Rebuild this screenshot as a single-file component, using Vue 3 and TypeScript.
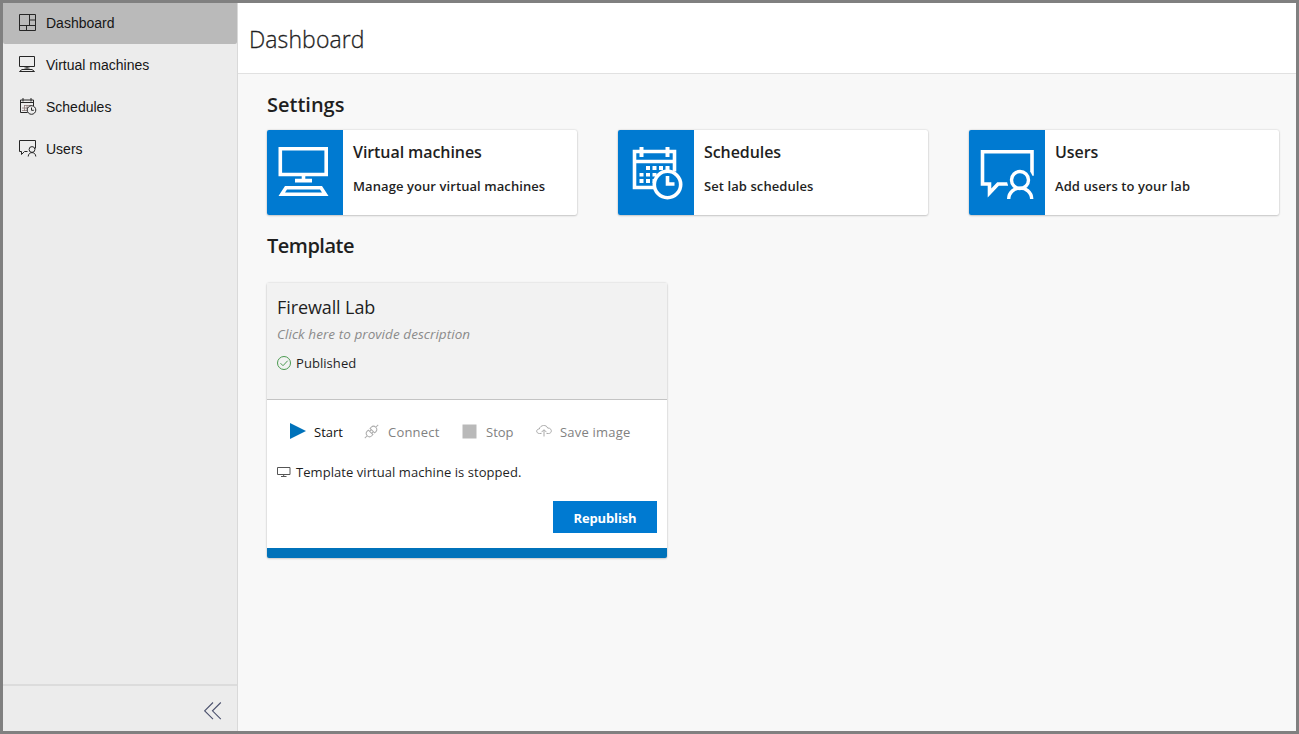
<script setup lang="ts">
import { ref } from 'vue'

interface NavItem { id: string; label: string }
interface Tile { id: string; title: string; text: string }

const nav: NavItem[] = [
  { id: 'dashboard', label: 'Dashboard' },
  { id: 'machines', label: 'Virtual machines' },
  { id: 'schedules', label: 'Schedules' },
  { id: 'users', label: 'Users' },
]
const tiles: Tile[] = [
  { id: 'machines', title: 'Virtual machines', text: 'Manage your virtual machines' },
  { id: 'schedules', title: 'Schedules', text: 'Set lab schedules' },
  { id: 'users', title: 'Users', text: 'Add users to your lab' },
]
const active = ref('dashboard')
</script>

<template>
  <div class="frame">
    <aside class="sidebar">
      <nav class="nav">
        <a v-for="item in nav" :key="item.id" class="nav-item" :class="{ active: item.id === active }" @click="active = item.id">
          <svg v-if="item.id === 'dashboard'" class="nav-icon" viewBox="0 0 18 18">
            <path d="M.5 .5h16v16h-16zM10.500 .5v10.500M.5 11.500h16M10.500 6h6M7.500 11.500v5" />
          </svg>
          <svg v-else-if="item.id === 'machines'" class="nav-icon" viewBox="0 0 18 18">
            <path d="M.5 .5h15v10h-15zM8 10.500v2M5.500 12h5M3 13.500h10l2.500 2h-15z" />
          </svg>
          <svg v-else-if="item.id === 'schedules'" class="nav-icon" viewBox="0 0 18 18">
            <path d="M8.500 14.500h-7v-12.500h13v6M1.500 4.500h13M4 0v3.500M12 0v3.500" />
            <path class="fine" d="M5 7.500h8M3 10h6M3 12.500h5M5.500 7v6M8 7v4" />
            <circle cx="12.500" cy="12" r="4.300" /><path d="M12.500 9.500v2.800h2.300" />
          </svg>
          <svg v-else class="nav-icon" viewBox="0 0 18 18">
            <path d="M8.500 11.500h-3l-3 3v-3h-2v-11h16v8" />
            <circle cx="13" cy="9.500" r="2.900" /><path d="M9.200 16.500c.2-5.200 7.400-5.200 7.600 0" />
          </svg>
          <span>{{ item.label }}</span>
        </a>
      </nav>
      <div class="collapse">
        <svg width="18" height="18" viewBox="0 0 18 18"><path d="M9 .5l-8.300 8.300 8.300 8.300M16.800 .5l-8.300 8.300 8.300 8.300" /></svg>
      </div>
    </aside>

    <main class="main">
      <header class="header"><h1>Dashboard</h1></header>
      <section class="content">
        <h2>Settings</h2>
        <div class="tiles">
          <article v-for="tile in tiles" :key="tile.id" class="tile">
            <div class="tile-icon">
              <svg v-if="tile.id === 'machines'" viewBox="0 0 76 85">
                <path d="M13.300 18.800h45.900v25.700h-45.900zM36.500 45v6" stroke-width="3.600" />
                <path d="M28 52.500h17v-3.700h-17z" class="solid" />
                <path fill-rule="evenodd" class="solid" d="M18 56h37l6.500 10h-50zM20 59.400l-2 3h37l-2-3z" />
              </svg>
              <svg v-else-if="tile.id === 'schedules'" viewBox="0 0 76 85">
                <path d="M39 57.500h-22.500v-36h40v20M16.500 31.500h40" stroke-width="3.600" />
                <path d="M23.500 17v10M49.500 17v10" stroke-width="4" />
                <path class="solid" d="M28 36h4v4h-4zM34.500 36h4v4h-4zM41 36h4v4h-4zM47.500 36h4v4h-4zM21.500 43h4v3.500h-4zM28 43h4v3.500h-4zM34.500 43h4v3.500h-4zM21.500 49h4v4h-4zM28 49h4v4h-4zM34.500 49h3v4h-3z" />
                <circle class="backed" cx="49.500" cy="54.500" r="13.200" stroke-width="3.600" />
                <path d="M49.500 46v8h7" stroke-width="3.600" />
              </svg>
              <svg v-else viewBox="0 0 76 85">
                <path d="M39 54h-10l-8.500 9v-9h-7v-32.200h49.500v24" stroke-width="3.600" />
                <circle class="backed gap" cx="51" cy="50" r="11" />
                <circle class="backed" cx="51" cy="50" r="8.500" stroke-width="3.400" />
                <path d="M39.700 69c.4-14.500 22.500-14.500 23 0" stroke-width="3.400" />
              </svg>
            </div>
            <div class="tile-body">
              <h3>{{ tile.title }}</h3>
              <p>{{ tile.text }}</p>
            </div>
          </article>
        </div>

        <h2 class="template-title">Template</h2>
        <article class="lab">
          <div class="lab-head">
            <h3>Firewall Lab</h3>
            <p class="desc">Click here to provide description</p>
            <p class="state">
              <svg width="14" height="14" viewBox="0 0 14 14"><circle cx="7" cy="7" r="6.500" /><path d="M3.500 7.200l2.500 2.500 4.700-5" /></svg>
              <span>Published</span>
            </p>
          </div>
          <div class="lab-body">
            <div class="actions">
              <button class="action start">
                <svg width="16" height="16" viewBox="0 0 16 16"><path d="M0 0l16 8-16 8z" fill="#0072ba" /></svg><span>Start</span>
              </button>
              <button class="action connect" disabled>
                <svg width="15" height="15" viewBox="0 0 15 15" fill="none" stroke="#adadad"><path transform="rotate(-45 7.500 7.500)" d="M-2 7.500h3.500M13.500 7.500h3.500M6.300 4.300h-1.600a3.200 3.200 0 0 0 0 6.400h1.600zM8.700 4.300h1.600a3.200 3.200 0 0 1 0 6.400h-1.600zM6.300 6h2.400M6.300 9h2.400" /></svg><span>Connect</span>
              </button>
              <button class="action stop" disabled>
                <svg width="15" height="15" viewBox="0 0 15 15"><path d="M.5 .5h14v14h-14z" fill="#b9b9b9" /></svg><span>Stop</span>
              </button>
              <button class="action save" disabled>
                <svg width="16" height="12" viewBox="0 0 16 12" fill="none" stroke="#aaa"><path d="M5.500 8.500h-2c-3.700 0-3.700-4.500-.2-4.500 1-4.500 7.500-4.500 8.300-1 4.800-.2 4.800 5.500 1 5.500h-2.100M8 11.500v-6.500M5.500 7.200l2.500-2.500 2.500 2.500" /></svg><span>Save image</span>
              </button>
            </div>
            <p class="status">
              <svg width="14" height="12" viewBox="0 0 14 12"><path d="M.5 1.500h12.500v7h-12.500zM6.700 8.500v2M4 10.500h5.500" /></svg>
              <span>Template virtual machine is stopped.</span>
            </p>
            <button class="republish"><span>Republish</span></button>
          </div>
        </article>
      </section>
    </main>
  </div>
</template>

<style>
body { margin: 0; overflow: hidden; }
</style>

<style scoped>
* { box-sizing: border-box; }
h1, h2, h3, p { margin: 0; font-weight: 400; }
button { border: 0; padding: 0; margin: 0; background: none; font: inherit; color: inherit; }
svg { display: block; flex: none; }
.frame { display: flex; width: 1299px; height: 734px; border: 3px solid #808080; background: #f8f8f8; color: #1f1f1f; font-family: 'Open Sans', 'Noto Sans', sans-serif; font-size: 14px; white-space: nowrap; }
.sidebar { display: flex; flex: none; flex-direction: column; width: 235px; background: #ececec; border-right: 1px solid #d9d9d9; }
.nav { flex: 1; }
.nav-item { display: flex; align-items: center; height: 41px; margin-bottom: 1px; padding: 0 0 1px 16px; gap: 9px; font: 14px 'Liberation Sans', Arial, sans-serif; color: #161616; }
.nav-item.active { background: #bababa; border-radius: 0 0 2px 2px; }
.nav-icon { width: 18px; height: 18px; fill: none; stroke: #262626; stroke-width: 1; }
.fine { stroke: #8c7a78; stroke-width: .8; }
.collapse { display: flex; align-items: center; justify-content: flex-end; height: 47px; padding: 5px 15px 0 0; border-top: 2px solid #dcdcdc; }
.collapse path { fill: none; stroke: #4a506c; stroke-width: 1.1; }
.main { flex: 1; min-width: 0; }
.header { height: 71px; padding: 20px 0 0 11px; background: #fff; border-bottom: 1px solid #e1e1e1; }
h1 { font-size: 23px; font-weight: 300; line-height: 32px; letter-spacing: .1px; -webkit-text-stroke: .3px #1f1f1f; }
.content { padding: 16px 0 0 29px; }
h2 { height: 30px; font-size: 20px; font-weight: 600; line-height: 30px; }
.tiles { display: flex; gap: 41px; margin-top: 10px; }
.tile { display: flex; flex: none; width: 310px; height: 85px; background: #fff; border-radius: 2px; overflow: hidden; box-shadow: 0 0 2px rgba(0, 0, 0, .2), 0 1px 2px rgba(0, 0, 0, .15); }
.tile-icon { width: 76px; background: #007ad1; }
.tile-icon svg { width: 76px; height: 85px; fill: none; stroke: #fff; }
.tile-icon .solid { fill: #fff; stroke: none; }
.tile-icon .backed { fill: #007ad1; }
.tile-icon .gap { stroke: #007ad1; stroke-width: 4; }
.tile-body { padding: 10px 0 0 10px; }
.tile h3 { font-size: 16px; font-weight: 600; line-height: 24px; letter-spacing: -.08px; }
.tile p { margin-top: 12px; font-size: 13px; font-weight: 600; line-height: 20px; letter-spacing: .08px; }
.template-title { margin-top: 16px; letter-spacing: -.5px; }
.lab { width: 400px; height: 275px; margin-top: 22px; background: #fff; border-radius: 2px; border-bottom: 10px solid #0072ba; box-shadow: 0 0 2px rgba(0, 0, 0, .22), 0 1px 2px rgba(0, 0, 0, .12); }
.lab-head { height: 117px; padding: 10px; background: #f2f2f2; border-bottom: 1px solid #c4c4c4; }
.lab-head h3 { font-size: 18px; line-height: 28px; letter-spacing: -.1px; }
.desc { margin-top: 3px; font-size: 13.5px; font-style: italic; line-height: 20px; letter-spacing: .06px; color: #8b8b8b; }
.state, .status { display: flex; align-items: center; gap: 5px; height: 20px; font-size: 13px; letter-spacing: .06px; }
.state { margin-top: 9px; }
.state svg { fill: none; stroke: #4b9a50; }
.lab-body { display: flex; flex-direction: column; padding: 22px 10px 0; }
.actions { display: flex; align-items: center; height: 20px; padding-left: 13px; }
.action { display: flex; align-items: center; gap: 9px; font-size: 13px; color: #111; }
.action:disabled { color: #818181; }
.action span { display: block; }
.action svg { margin-bottom: 2px; }
.start { width: 74px; gap: 8px; }
.connect { width: 98px; letter-spacing: .2px; }
.stop { width: 74px; }
.save { gap: 8px; letter-spacing: .2px; }
.status { margin-top: 20px; }
.status svg { fill: none; stroke: #555; }
.republish { align-self: flex-end; width: 104px; height: 32px; margin-top: 19px; padding-top: 1px; background: #007ad1; color: #fff; font-size: 13px; font-weight: 700; letter-spacing: -.15px; }
</style>
